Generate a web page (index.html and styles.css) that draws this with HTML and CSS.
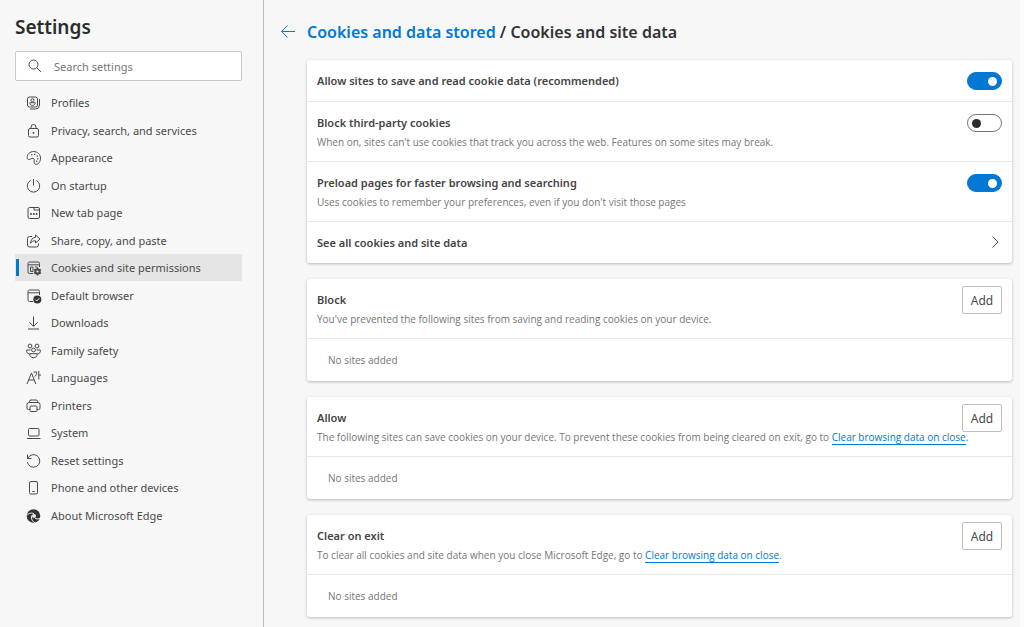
FILE: index.html
```html
<!DOCTYPE html>
<html lang="en">
<head>
    <meta charset="UTF-8">
    <meta name="viewport" content="width=device-width, initial-scale=1.0">
    <title>Settings</title>
    <link rel="stylesheet" href="styles.css">
</head>
<body>
<aside class="sidebar">
    <h2 class="title">Settings</h2>
    <label class="search">
        <svg class="icon" viewBox="0 0 16 16"><circle cx="6.5" cy="6.5" r="4.5"/><path d="M9.800 9.800l4.200 4.200"/></svg>
        <input type="text" placeholder="Search settings" aria-label="Search settings">
    </label>
    <ul class="menu">
        <li><a href="#">
            <svg class="icon" viewBox="0 0 16 16"><rect x="1.5" y="2" width="10" height="10" rx="2"/><circle cx="6.5" cy="5.2" r="1.5"/><path d="M3.8 7.7h5.4c0 1.7-1 2.7-2.7 2.7s-2.7-1-2.7-2.7zM13.500 4v6a4 4 0 0 1-4 4H4"/></svg>
            Profiles</a></li>
        <li><a href="#">
            <svg class="icon" viewBox="0 0 16 16"><rect x="2.5" y="5.5" width="10" height="8.5" rx="1.5"/><path d="M5 5.500V4a2.500 2.500 0 0 1 5 0v1.500"/><circle class="fill" cx="7.5" cy="9.8" r="0.9"/></svg>
            Privacy, search, and services</a></li>
        <li><a href="#">
            <svg class="icon" viewBox="0 0 16 16"><path d="M1.200 7.600C1 4.200 4 1.600 7.500 1.500c4 0 7 3 7 6.500 0 3.200-1.700 6.300-4.300 6.300-2 0-2.200-1.500-2-3.300.200-2-.700-3.200-2.200-2.600-1.500.700-4.600 2.400-4.800-.800z"/><g class="fill"><circle cx="5.8" cy="4.8" r="0.7"/><circle cx="8.8" cy="4.3" r="0.7"/><circle cx="11.3" cy="6" r="0.7"/><circle cx="11.8" cy="8.7" r="0.7"/><circle cx="10.7" cy="11.3" r="0.7"/></g></svg>
            Appearance</a></li>
        <li><a href="#">
            <svg class="icon" viewBox="0 0 16 16"><path d="M7.500 1v6.500M4.500 2.500a6.200 6.200 0 1 0 6 0"/></svg>
            On startup</a></li>
        <li><a href="#">
            <svg class="icon" viewBox="0 0 16 16"><rect x="2" y="2.5" width="11.5" height="11" rx="1.5"/><path d="M8 2.500v2.500h5.500"/><g class="fill"><circle cx="5" cy="9" r="0.9"/><circle cx="7.8" cy="9" r="0.9"/><circle cx="10.6" cy="9" r="0.9"/></g></svg>
            New tab page</a></li>
        <li><a href="#">
            <svg class="icon" viewBox="0 0 16 16"><path d="M6 3.500H3.500a2 2 0 0 0-2 2v6.500a2 2 0 0 0 2 2h7a2 2 0 0 0 2-2v-1.500M9.500 2l4.500 4-4.500 4V7.800C7.200 7.700 5.700 8.500 4.500 10.300 4.800 6.800 6.500 4.700 9.500 4.300z"/></svg>
            Share, copy, and paste</a></li>
        <li class="active"><a href="#">
            <svg class="icon" viewBox="0 0 16 16"><path d="M7 13.500H3.500A1.500 1.500 0 0 1 2 12V3.500A1.500 1.500 0 0 1 3.500 2H12a1.500 1.500 0 0 1 1.500 1.500V7M2 4.800h11.500"/><path d="M4.500 7H7v4.500H4.500zM9 7h2.500"/><circle cx="11.5" cy="11.5" r="2.2" stroke-width="2"/><path d="M11.500 7.500v8M8 9.500l7 4M15 9.500l-7 4" stroke-width="1.4"/><circle class="hole" cx="11.5" cy="11.5" r="1.1"/></svg>
            Cookies and site permissions</a></li>
        <li><a href="#">
            <svg class="icon" viewBox="0 0 16 16"><path d="M7 13.500H3.500A1.500 1.500 0 0 1 2 12V3.500A1.500 1.500 0 0 1 3.500 2H12a1.500 1.500 0 0 1 1.500 1.500V7M2 4.800h11.500"/><circle class="fill" cx="11.3" cy="11.5" r="4"/><path class="tick" d="M9.300 11.600l1.400 1.400 2.600-2.800"/></svg>
            Default browser</a></li>
        <li><a href="#">
            <svg class="icon" viewBox="0 0 16 16"><path d="M7.500 1.500v9.500M3.300 7.200l4.200 4.200 4.200-4.200M2 14h11"/></svg>
            Downloads</a></li>
        <li><a href="#">
            <svg class="icon" viewBox="0 0 16 16"><circle cx="4" cy="3" r="1.9"/><circle cx="11" cy="3" r="1.9"/><circle cx="7.5" cy="7" r="1.9"/><path d="M4.500 7H.7c-.5 2.200.6 3.700 3.100 4M10.500 7h3.800c.5 2.200-.6 3.700-3.100 4M3.800 10.700h7.400c.300 2.500-1.200 4-3.700 4s-4-1.500-3.700-4z"/></svg>
            Family safety</a></li>
        <li><a href="#">
            <svg class="icon" viewBox="0 0 16 16"><path d="M1 14L5.500 3l4.300 11M2.700 10h5.600M7.500 2h3.200c0 2.300-.700 3.700-2.200 4.700M12.800 1v8.500M12.800 5H15"/></svg>
            Languages</a></li>
        <li><a href="#">
            <svg class="icon" viewBox="0 0 16 16"><path d="M3.500 4.500v-1A1.500 1.500 0 0 1 5 2h5a1.500 1.500 0 0 1 1.500 1.500v1M4 11.500H2.500a1.500 1.500 0 0 1-1.500-1.500V6.500a2 2 0 0 1 2-2h9a2 2 0 0 1 2 2V10a1.500 1.500 0 0 1-1.500 1.500H11"/><rect x="4" y="8" width="7" height="5.5" rx="1"/></svg>
            Printers</a></li>
        <li><a href="#">
            <svg class="icon" viewBox="0 0 16 16"><rect x="2.5" y="3.5" width="10.5" height="7.5" rx="1.2"/><path d="M1 13.500h13.500"/></svg>
            System</a></li>
        <li><a href="#">
            <svg class="icon" viewBox="0 0 16 16"><path d="M1.500 1.500v4h4M1.800 5.300A6.300 6.300 0 1 1 1.300 9"/></svg>
            Reset settings</a></li>
        <li><a href="#">
            <svg class="icon" viewBox="0 0 16 16"><rect x="3.5" y="1.5" width="8" height="12.5" rx="1.5"/><path d="M6.300 11.500h2.400"/></svg>
            Phone and other devices</a></li>
        <li><a href="#">
            <svg class="icon" viewBox="0 0 16 16"><circle class="fill" cx="7.5" cy="8" r="6.8"/><path class="swirl" d="M.800 7.500C3 4.800 6 4.600 8 5.800M6.300 7c-1.800 2.500-.500 6 2.700 8M14.500 10c-1.800 1.300-4.300 1.200-5.500 0"/><circle class="hole" cx="8" cy="8" r="2"/></svg>
            About Microsoft Edge</a></li>
    </ul>
</aside>
<main class="content">
    <div class="heading">
        <a class="back" href="#" aria-label="Back"><svg viewBox="0 0 16 16"><path d="M15 7.500H1.500M7.500 1.500l-6 6 6 6"/></svg></a>
        <h1><a href="#">Cookies and data stored</a> / Cookies and site data</h1>
    </div>

    <section class="card">
        <div class="row">
            <label class="name" for="save">Allow sites to save and read cookie data (recommended)</label>
            <input class="switch" type="checkbox" id="save" checked>
        </div>
        <div class="row">
            <div class="text">
                <label class="name" for="third">Block third-party cookies</label>
                <p>When on, sites can't use cookies that track you across the web. Features on some sites may break.</p>
            </div>
            <input class="switch" type="checkbox" id="third">
        </div>
        <div class="row">
            <div class="text">
                <label class="name" for="preload">Preload pages for faster browsing and searching</label>
                <p>Uses cookies to remember your preferences, even if you don't visit those pages</p>
            </div>
            <input class="switch" type="checkbox" id="preload" checked>
        </div>
        <a class="row" href="#">
            <span class="name">See all cookies and site data</span>
            <svg class="arrow" viewBox="0 0 14 14"><path d="M4.500 1.500L10 7l-5.500 5.500"/></svg>
        </a>
    </section>

    <section class="card">
        <div class="row">
            <div class="text">
                <h3 class="name">Block</h3>
                <p>You've prevented the following sites from saving and reading cookies on your device.</p>
            </div>
            <button class="add" type="button">Add</button>
        </div>
        <div class="empty">No sites added</div>
    </section>

    <section class="card">
        <div class="row">
            <div class="text">
                <h3 class="name">Allow</h3>
                <p>The following sites can save cookies on your device. To prevent these cookies from being cleared on exit, go to <a href="#">Clear browsing data on close</a>.</p>
            </div>
            <button class="add" type="button">Add</button>
        </div>
        <div class="empty">No sites added</div>
    </section>

    <section class="card">
        <div class="row">
            <div class="text">
                <h3 class="name">Clear on exit</h3>
                <p>To clear all cookies and site data when you close Microsoft Edge, go to <a href="#">Clear browsing data on close</a>.</p>
            </div>
            <button class="add" type="button">Add</button>
        </div>
        <div class="empty">No sites added</div>
    </section>
</main>
</body>
</html>
```
FILE: styles.css
```css
*{
    padding: 0;
    margin: 0;
    box-sizing: border-box;
}
body{
    display: flex;
    min-height: 100vh;
    background-color: #f7f7f7;
    color: #4a4a4a;
    font-family: "Noto Sans", "Open Sans", sans-serif;
    font-size: 11px;
}
a{
    color: #0078d4;
    text-decoration: none;
}
svg{
    fill: none;
    stroke: currentColor;
    flex: none;
}
.sidebar{
    flex: 0 0 264px;
    padding: 12px 21px 0 15px;
    border-right: 1px solid #bdbdbd;
}
.title{
    font-size: 19px;
    line-height: 30px;
    font-weight: 600;
    color: #2b2b2b;
}
.search{
    display: flex;
    align-items: center;
    height: 30px;
    margin-top: 9px;
    padding-left: 11px;
    gap: 11px;
    background-color: #fff;
    border: 1px solid #c8c8c8;
    border-radius: 2px;
}
.search input{
    flex: 1;
    min-width: 0;
    border: none;
    outline: none;
    background: none;
    font: inherit;
}
.search input::placeholder{
    color: #767676;
}
.menu{
    margin-top: 8px;
    list-style: none;
}
.menu li:nth-child(even){
    margin-top: 1px;
}
.menu a{
    display: flex;
    align-items: center;
    gap: 9px;
    padding-left: 11px;
    line-height: 27px;
    color: #4a4a4a;
}
.menu .active{
    position: relative;
    background-color: #e5e5e5;
}
/* blue marker of the current page */
.menu .active::before{
    content: "";
    position: absolute;
    left: 1px;
    top: 5px;
    bottom: 5px;
    width: 3px;
    background-color: #0078d4;
}
.icon{
    width: 16px;
    height: 16px;
    color: #4a4a4a;
}
.icon .fill{
    fill: #333;
    stroke: none;
}
.icon .hole{
    fill: #e5e5e5;
    stroke: none;
}
.icon .tick,
.icon .swirl{
    stroke: #f7f7f7;
}
.content{
    flex: 1;
    min-width: 0;
    padding: 18px 8px 10px 16px;
    border-right: 4px solid #fcfcfc;
}
.heading{
    display: flex;
    align-items: center;
    gap: 11px;
    margin-bottom: 14px;
}
.heading h1{
    font-size: 16px;
    line-height: 28px;
    font-weight: 600;
    color: #333;
}
.back,
.back svg{
    display: block;
    width: 16px;
    height: 16px;
}
.card{
    margin: 0 0 16px 27px;
    background-color: #fff;
    border-radius: 3px;
    box-shadow: 0 1px 3px rgba(0, 0, 0, .25);
}
.card:last-child{
    margin-bottom: 0;
}
.row{
    display: flex;
    justify-content: space-between;
    align-items: flex-start;
    padding: 12px 10px 9px;
    border-bottom: 1px solid #e8e8e8;
    color: #4a4a4a;
}
.row:last-child{
    border-bottom: none;
}
.name{
    display: block;
    padding-bottom: 2px;
    font-size: 11px;
    line-height: 18px;
    font-weight: 600;
    color: #444;
}
/* the description may run on below the Add button */
.text{
    margin-right: -10px;
    padding-bottom: 2px;
}
.text p,
.empty{
    font-family: "Open Sans", "Noto Sans", sans-serif;
    font-size: 10px;
    line-height: 16px;
    color: #767676;
}
.text p a{
    border-bottom: 1px solid #0078d4;
}
.switch{
    appearance: none;
    display: flex;
    align-items: center;
    flex: none;
    width: 35px;
    height: 18px;
    padding: 0 4px;
    border: 1px solid #767676;
    border-radius: 9px;
    background-color: #fff;
}
.switch::before{
    content: "";
    width: 9px;
    height: 9px;
    border-radius: 50%;
    background-color: #2b2b2b;
}
.switch:checked{
    justify-content: flex-end;
    border-color: #0078d4;
    background-color: #0078d4;
}
.switch:checked::before{
    background-color: #fff;
}
.arrow{
    width: 14px;
    height: 14px;
    margin-top: 1px;
}
.add{
    flex: none;
    width: 40px;
    height: 28px;
    margin-top: -5px;
    border: 1px solid #bdbdbd;
    border-radius: 2px;
    background-color: #fff;
    color: #4a4a4a;
    font: inherit;
    font-size: 12px;
}
.empty{
    padding: 13px 21px;
}
```
